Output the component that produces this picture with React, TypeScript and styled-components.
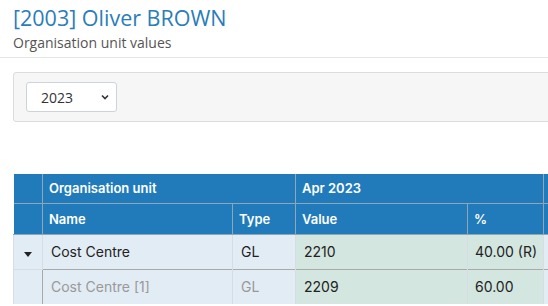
import React from "react";
import styled, { createGlobalStyle } from "styled-components";

const Global = createGlobalStyle`
  html, body { margin: 0; padding: 0; background: #fff; overflow: hidden; }
  body { font-family: "Open Sans", "Liberation Sans", sans-serif; }
`;

const Page = styled.div`
  width: 548px;
  height: 306px;
  overflow: hidden;
`;

const Header = styled.header`
  padding: 3px 13px 4px;
  border-bottom: 1px solid #e6e6e6;
`;

const Title = styled.h1`
  margin: 0;
  font-family: "Open Sans", sans-serif;
  font-weight: 400;
  font-size: 21.5px;
  line-height: 30px;
  color: #2a7dba;
`;

const Subtitle = styled.div`
  font-family: "Open Sans", sans-serif;
  font-size: 14px;
  line-height: 20px;
  color: #555;
`;

const FilterPanel = styled.div`
  margin: 14px 0 0 13px;
  width: 600px;
  height: 48px;
  box-sizing: content-box;
  background: #f6f6f6;
  border: 1px solid #dcdcdc;
  border-radius: 3px;
  display: flex;
  align-items: center;
  padding: 0 12px;
`;

const Select = styled.div`
  width: 91px;
  height: 30px;
  box-sizing: border-box;
  background: #fff;
  border: 1px solid #ccd3dc;
  border-radius: 3px;
  display: flex;
  align-items: center;
  justify-content: space-between;
  padding: 0 6px 0 14px;
  font-family: "Open Sans", sans-serif;
  font-size: 14px;
  color: #333;
`;

const Table = styled.table`
  margin: 52px 0 0 13px;
  border-collapse: collapse;
  table-layout: fixed;
  width: 600px;
  font-family: Inter, "Liberation Sans", sans-serif;
`;

const HeadCell = styled.th<{ $h: number }>`
  background: #217bbb;
  color: #fff;
  font-weight: 600;
  font-size: 13px;
  text-align: left;
  height: ${(p) => p.$h}px;
  padding: 0 6px;
  box-sizing: border-box;
  border: 1px solid #8fa6b9;
  border-top: none;
`;

const Cell = styled.td<{ $green?: boolean; $muted?: boolean; $pad?: number }>`
  background: ${(p) => (p.$green ? "#d3e6df" : "#e2ecf4")};
  color: ${(p) => (p.$muted ? "#999" : "#222")};
  font-size: 14px;
  height: 35px;
  padding: 0 0 0 ${(p) => p.$pad ?? 8}px;
  box-sizing: border-box;
  border: 1px solid #d6dde3;
  border-bottom: none;
  white-space: nowrap;
`;

const SubRow = styled.tr`
  & > td:not(:first-child) {
    border-top: 1px solid #a9a9a9;
  }
  & > td:first-child {
    border-right: none;
  }
  & > td:nth-child(2) {
    border-left: 1px solid #a9a9a9;
  }
`;

const Caret = styled.span`
  display: inline-block;
  width: 0;
  height: 0;
  border-left: 4px solid transparent;
  border-right: 4px solid transparent;
  border-top: 5px solid #222;
`;

const CaretCell = styled(Cell)`
  padding: 0;
  text-align: center;
`;

export default function App() {
  return (
    <Page>
      <Global />
      <Header>
        <Title>[2003] Oliver BROWN</Title>
        <Subtitle>Organisation unit values</Subtitle>
      </Header>
      <FilterPanel>
        <Select>
          <span>2023</span>
          <svg width="10" height="10" viewBox="0 0 10 10">
            <path d="M2 3.5 L5 6.5 L8 3.5" fill="none" stroke="#333" strokeWidth="1.6" />
          </svg>
        </Select>
      </FilterPanel>
      <Table>
        <colgroup>
          <col style={{ width: 29 }} />
          <col style={{ width: 190 }} />
          <col style={{ width: 63 }} />
          <col style={{ width: 172 }} />
          <col style={{ width: 76 }} />
          <col style={{ width: 70 }} />
        </colgroup>
        <thead>
          <tr>
            <HeadCell $h={29} style={{ borderLeft: "none" }} />
            <HeadCell $h={29} colSpan={2}>Organisation unit</HeadCell>
            <HeadCell $h={29} colSpan={2}>Apr 2023</HeadCell>
            <HeadCell $h={29} />
          </tr>
          <tr>
            <HeadCell $h={31} style={{ borderLeft: "none" }} />
            <HeadCell $h={31}>Name</HeadCell>
            <HeadCell $h={31}>Type</HeadCell>
            <HeadCell $h={31}>Value</HeadCell>
            <HeadCell $h={31}>%</HeadCell>
            <HeadCell $h={31} />
          </tr>
        </thead>
        <tbody>
          <tr>
            <CaretCell>
              <Caret />
            </CaretCell>
            <Cell>Cost Centre</Cell>
            <Cell>GL</Cell>
            <Cell $green>2210</Cell>
            <Cell $green $pad={7}>40.00 (R)</Cell>
            <Cell />
          </tr>
          <SubRow>
            <CaretCell />
            <Cell $muted>Cost Centre [1]</Cell>
            <Cell $muted>GL</Cell>
            <Cell $green>2209</Cell>
            <Cell $green $pad={7}>60.00</Cell>
            <Cell />
          </SubRow>
        </tbody>
      </Table>
    </Page>
  );
}
